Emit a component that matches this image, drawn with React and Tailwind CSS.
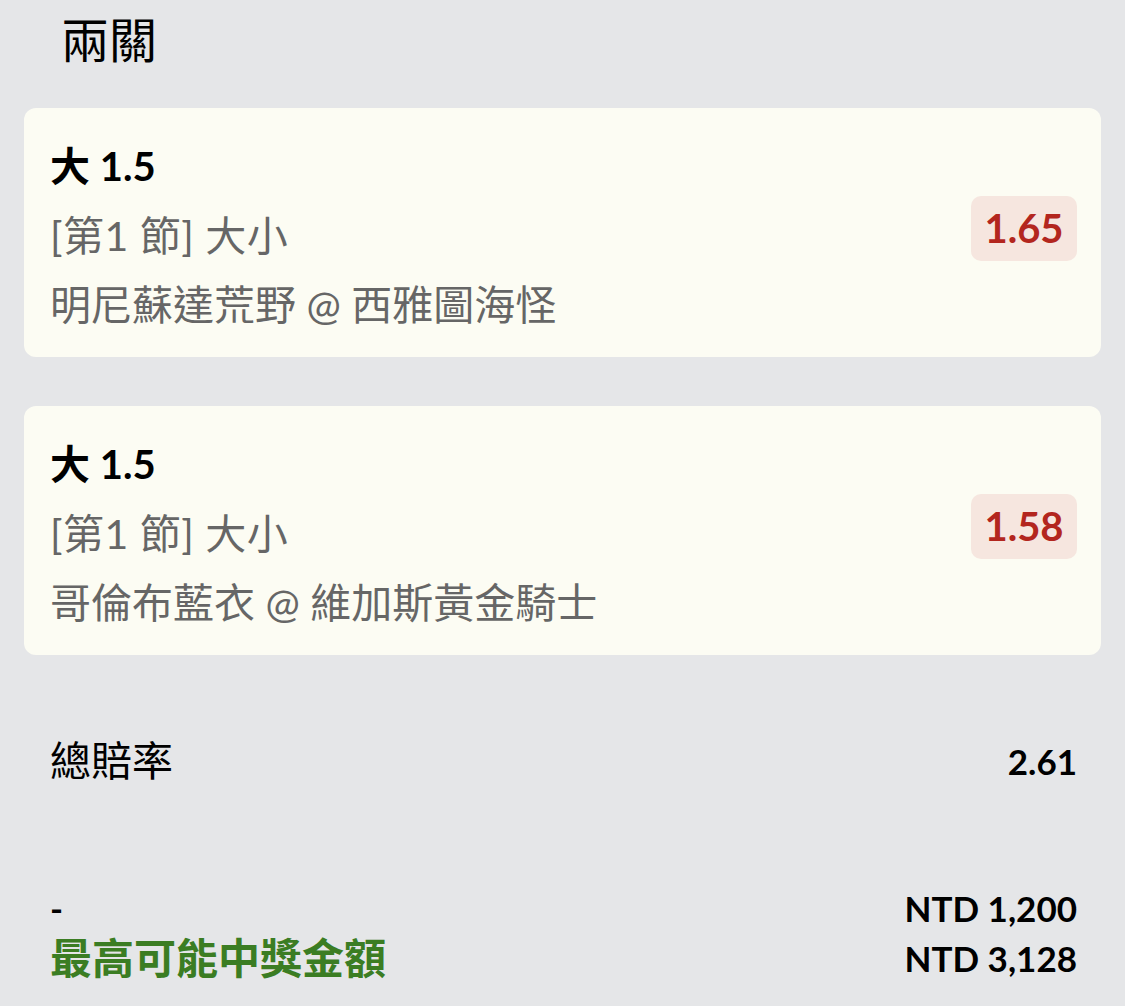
export default function App() {
  const legs = [
    { pick: "大 1.5", market: "[第1 節] 大小", match: "明尼蘇達荒野 @ 西雅圖海怪", odds: "1.65" },
    { pick: "大 1.5", market: "[第1 節] 大小", match: "哥倫布藍衣 @ 維加斯黃金騎士", odds: "1.58" },
  ];

  return (
    <div
      className="min-h-[1006px] w-full bg-[#e5e6e8] text-black"
      style={{ fontFamily: 'Lato, "Noto Sans CJK TC", sans-serif' }}
    >
      <div className="h-[80px] flex items-center pl-[61px] text-[48px] leading-none">兩關</div>

      <div className="mt-[28px] flex flex-col gap-[49px] px-[24px]">
        {legs.map((leg, i) => (
          <div key={i} className="bg-[#fcfcf3] rounded-[12px] flex items-center justify-between pl-[26px] pr-[24px] pt-[24px] pb-[18px]">
            <div className="flex flex-col text-[41px] leading-[69px]">
              <div className="font-bold text-[40px]">{leg.pick}</div>
              <div className="text-[#666666] tracking-[0.5px]">{leg.market}</div>
              <div className="text-[#666666]">{leg.match}</div>
            </div>
            <div className="bg-[#f6e6df] rounded-[10px] h-[65px] w-[106px] flex items-center justify-center text-[#b3261e] font-bold text-[40px] -mt-[15px]">
              {leg.odds}
            </div>
          </div>
        ))}
      </div>

      <div className="mt-[72px] pl-[50px] pr-[48px] flex items-center justify-between h-[68px]">
        <span className="text-[41px]">總賠率</span>
        <span className="font-bold text-[35px]">2.61</span>
      </div>

      <div className="mt-[88px] pl-[50px] pr-[48px] flex flex-col">
        <div className="flex items-center justify-between h-[50px]">
          <span className="font-bold text-[35px]">-</span>
          <span className="font-bold text-[35px]">NTD 1,200</span>
        </div>
        <div className="flex items-center justify-between h-[50px]">
          <span className="font-bold text-[42px] text-[#3b7d23]">最高可能中獎金額</span>
          <span className="font-bold text-[35px]">NTD 3,128</span>
        </div>
      </div>
    </div>
  );
}
